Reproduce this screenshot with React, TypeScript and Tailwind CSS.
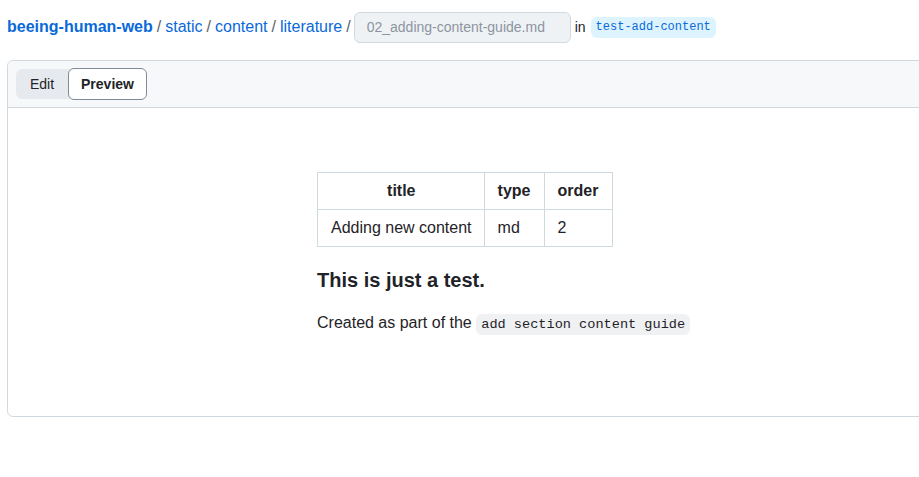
const App = () => {
  return (
    <div className="w-[919px] h-[477px] overflow-hidden bg-white text-[#1f2328] font-['Liberation_Sans',Arial,sans-serif]">
      <div className="flex items-center h-[43px] pt-[11px] pl-[7px] text-[16px] text-[#0969da]">
        <span className="font-bold">beeing-human-web</span>
        <span className="text-[#59636e] mx-[4px]">/</span>
        <span>static</span>
        <span className="text-[#59636e] mx-[4px]">/</span>
        <span>content</span>
        <span className="text-[#59636e] mx-[4px]">/</span>
        <span>literature</span>
        <span className="text-[#59636e] ml-[4px] mr-[3px]">/</span>
        <div className="w-[217px] h-[31px] rounded-[6px] border border-[#d1d9e0] bg-[#eff2f5] flex items-center px-[12px] text-[14px] text-[#8c959f]">
          02_adding-content-guide.md
        </div>
        <span className="text-[#1f2328] text-[14px] ml-[4px] mr-[5px]">in</span>
        <span className="h-[21px] px-[5px] rounded-[6px] bg-[#ddf4ff] text-[#0969da] text-[12px] font-['Liberation_Mono',monospace] flex items-center">
          test-add-content
        </span>
      </div>

      <div className="ml-[7px] mt-[17px] w-[1000px] h-[357px] border border-[#d1d9e0] rounded-[6px] overflow-hidden">
        <div className="h-[47px] bg-[#f6f8fa] border-b border-[#d1d9e0] flex items-center pl-[8px]">
          <div className="flex items-center bg-[#e6eaef] rounded-[6px] h-[30px]">
            <div className="w-[52px] h-[30px] flex items-center justify-center text-[14px] text-[#1f2328]">Edit</div>
            <div className="w-[79px] h-[32px] flex items-center justify-center text-[14px] font-bold bg-white border border-[#818b98] rounded-[6px]">Preview</div>
          </div>
        </div>

        <div className="pl-[309px] pt-[64px]">
          <table className="border-collapse text-[16px] whitespace-nowrap">
            <thead>
              <tr>
                <th className="border border-[#d1d9e0] h-[37px] w-[166px] pl-[13px] pr-[12px] font-bold text-center">title</th>
                <th className="border border-[#d1d9e0] h-[37px] w-[60px] px-[13px] font-bold text-center">type</th>
                <th className="border border-[#d1d9e0] h-[37px] w-[68px] px-[13px] font-bold text-center">order</th>
              </tr>
            </thead>
            <tbody>
              <tr>
                <td className="border border-[#d1d9e0] h-[37px] pl-[13px] pr-[12px]">Adding new content</td>
                <td className="border border-[#d1d9e0] h-[37px] px-[13px]">md</td>
                <td className="border border-[#d1d9e0] h-[37px] px-[13px]">2</td>
              </tr>
            </tbody>
          </table>
          <h3 className="mt-[21px] text-[20px] font-bold leading-[25px]">This is just a test.</h3>
          <p className="mt-[18px] text-[16px] leading-[24px]">
            Created as part of the{' '}
            <code className="font-['Liberation_Mono',monospace] text-[13.6px] bg-[#eff1f3] rounded-[6px] px-[5px] py-[3px]">add section content guide</code>
          </p>
        </div>
      </div>
    </div>
  );
};

export default App;
